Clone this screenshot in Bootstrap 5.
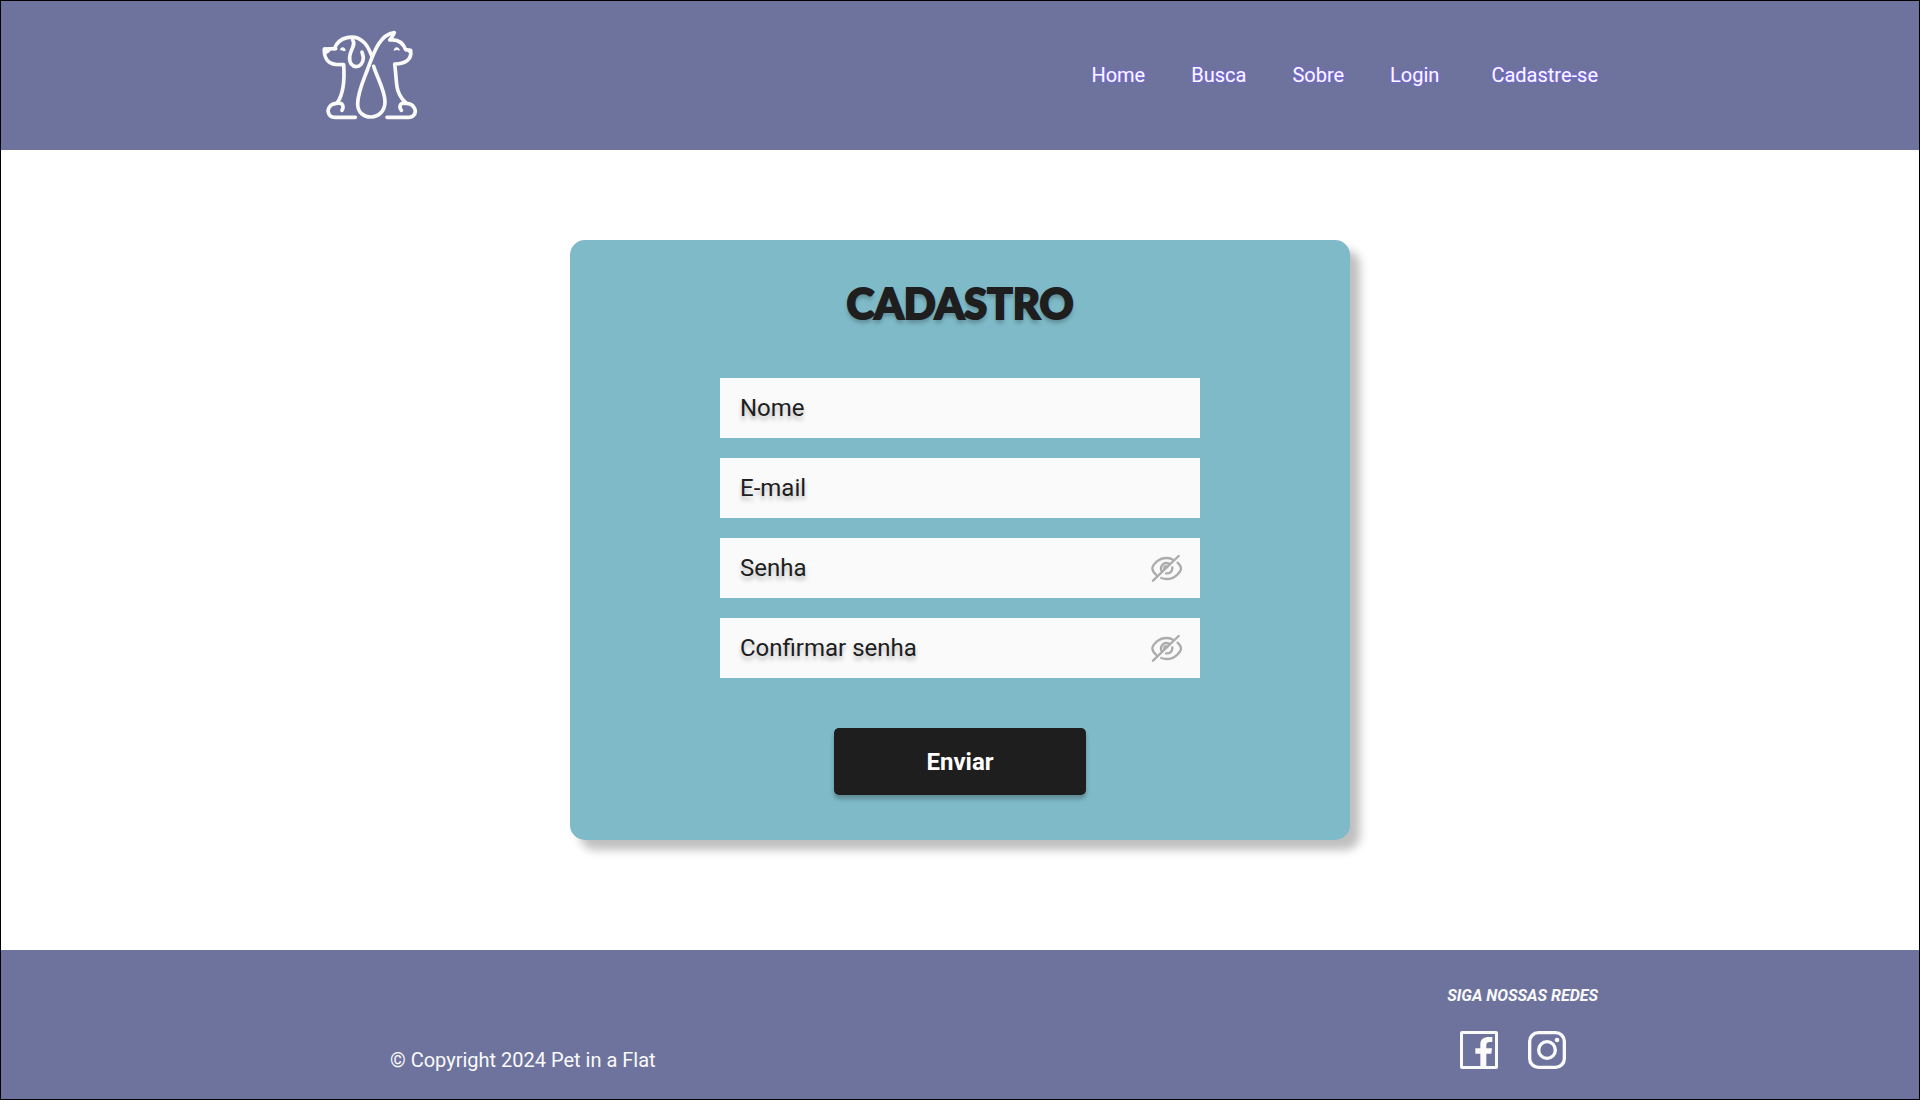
<!DOCTYPE html>
<html lang="pt-BR">
<head>
<meta charset="utf-8">
<meta name="viewport" content="width=device-width, initial-scale=1">
<title>Pet in a Flat - Cadastro</title>
<link href="https://cdn.jsdelivr.net/npm/bootstrap@5.3.0/dist/css/bootstrap.min.css" rel="stylesheet">
<style>
  body { font-family: Roboto, "Liberation Sans", sans-serif; color: #1e1e1e; background: #fff; border: 1px solid #000; }
  .bar-purple { background: #6e739e; color: #fafafa; }
  .site-header { min-height: 149px; padding-bottom: 2px; }
  .site-footer { min-height: 149px; }
  .page-width { padding-left: 22px; padding-right: 22px; }
  .menu-links { gap: 46px; }
  .menu-links .nav-link { font-size: 20px; line-height: 24px; color: #fafafa; text-shadow: 0 0 1px #7f66ff, 0 0 2px #7f66ff, 0 0 2px #7f66ff; }
  .menu-links .menu-signup { margin-left: 6px; }
  .signup-area { padding: 90px 16px; }
  .signup-card { width: 100%; max-width: 780px; min-height: 600px; border-radius: 15px; background: #7fbac8; box-shadow: 10px 10px 10px rgba(0,0,0,.25); padding: 36px 16px 44px; }
  .signup-title { font-family: Lato, Roboto, sans-serif; font-weight: 900; font-size: 42px; line-height: 54px; -webkit-text-stroke: 2px #1e1e1e; text-shadow: 0 4px 4px rgba(0,0,0,.25); }
  .signup-form { width: 100%; max-width: 480px; gap: 20px; margin-top: 48px; }
  .field-box { height: 60px; background: #fafafa; }
  .field-box .form-control { height: 60px; padding: 0 20px; font-size: 24px; color: #1e1e1e; }
  .field-label { left: 20px; font-size: 24px; line-height: 60px; pointer-events: none; text-shadow: 0 4px 4px rgba(0,0,0,.25); }
  .form-control:not(:placeholder-shown) + .field-label { opacity: 0; }
  .eye-toggle { margin-right: 18px; line-height: 0; }
  .send-button { width: 252px; height: 67px; margin-top: 30px; border-radius: 5px; border: 0; background: #1e1e1e; color: #fff; font-size: 24px; font-weight: 700; box-shadow: 0 4px 4px rgba(0,0,0,.25); }
  .copyright { font-size: 20px; line-height: 24px; padding: 0 0 27px 68px; }
  .social-title { font-size: 16px; line-height: 20px; font-weight: 700; font-style: italic; }
  .social-links { gap: 30px; padding: 25px 0 0 13px; }
  .social-links a { color: #fafafa; line-height: 0; }
</style>
<script defer src="https://cdn.jsdelivr.net/npm/bootstrap@5.3.0/dist/js/bootstrap.bundle.min.js"></script>
</head>
<body class="min-vh-100 d-flex flex-column">
<header class="site-header bar-purple d-flex align-items-center">
  <div class="container page-width d-flex justify-content-between align-items-center">
    <a href="#" aria-label="Pet in a Flat">
      <svg width="96" height="90" viewBox="36 30 288 270" fill="none" stroke="#fafafa" stroke-width="11" stroke-linecap="round" stroke-linejoin="round">
        <path d="M77 86L43 87C42 111 52 131 77 133L101 134C104 177 103 218 82 248"/>
        <path d="M73 86C87 48 134 43 157 63C170 72 179 91 185 108"/>
        <path d="M128 60C139 75 120 89 119 111C116 149 159 149 160 114C160 108 157 102 156 96"/>
        <path d="M43 83L64 86Q58 102 43 101Z" fill="#fafafa" stroke-width="2"/>
        <path d="M90 91C91 77 107 80 107 92L101 94Q96 89 90 91Z" fill="#fafafa" stroke="none"/>
        <path d="M82 250C99 246 102 261 96 271M79 250C57 252 47 273 61 288Q66 292 75 292H136"/>
        <path d="M191 139C202 174 225 212 225 245C225 304 143 306 143 252C143 218 160 182 172 150C190 102 207 44 253 38C249 46 247 52 239 60C268 56 281 73 287 89L302 91C306 117 289 132 254 132C257 153 258 180 261 200C264 222 275 236 287 248"/>
        <path d="M286 250C270 247 266 261 274 271M289 250C312 251 324 274 309 288Q304 292 296 292H231"/>
        <path d="M251 93C252 77 268 79 270 92Q260 87 251 93ZM290 87L306 92L304 103Q290 98 290 87Z" fill="#fafafa" stroke="none"/>
      </svg>
    </a>
    <nav aria-label="Principal">
      <ul class="menu-links nav">
        <li><a class="nav-link p-0" href="#">Home</a></li>
        <li><a class="nav-link p-0" href="#">Busca</a></li>
        <li><a class="nav-link p-0" href="#">Sobre</a></li>
        <li><a class="nav-link p-0" href="#">Login</a></li>
        <li class="menu-signup"><a class="nav-link p-0" href="#">Cadastre-se</a></li>
      </ul>
    </nav>
  </div>
</header>

<main class="signup-area flex-grow-1 d-flex justify-content-center align-items-start">
  <section class="signup-card d-flex flex-column align-items-center">
    <h1 class="signup-title m-0">CADASTRO</h1>
    <form class="signup-form d-flex flex-column">
      <div class="field-box position-relative d-flex align-items-center">
        <input class="form-control border-0 rounded-0 bg-transparent" id="nome" type="text" placeholder=" ">
        <label class="field-label position-absolute top-0" for="nome">Nome</label>
      </div>
      <div class="field-box position-relative d-flex align-items-center">
        <input class="form-control border-0 rounded-0 bg-transparent" id="email" type="email" placeholder=" ">
        <label class="field-label position-absolute top-0" for="email">E-mail</label>
      </div>
      <div class="field-box position-relative d-flex align-items-center">
        <input class="form-control border-0 rounded-0 bg-transparent" id="senha" type="password" placeholder=" ">
        <label class="field-label position-absolute top-0" for="senha">Senha</label>
        <button class="eye-toggle btn p-0 border-0" type="button" aria-label="Mostrar senha">
          <svg width="32" height="28" viewBox="0 0 96 84" fill="none" stroke="#acacac" stroke-width="7" stroke-linecap="round">
            <path id="eye-shape" d="M9 80L86 6M18 62C10 55 7 48 7 43C7 34 24 12 49 12Q59 12 67 16M83 26C90 33 93 39 93 43C93 52 76 75 50 75Q41 75 34 72M35 52C28 36 42 22 57 29M67 40C68 52 59 60 48 58M43 45C42 38 46 36 50 37"/>
          </svg>
        </button>
      </div>
      <div class="field-box position-relative d-flex align-items-center">
        <input class="form-control border-0 rounded-0 bg-transparent" id="confirmar" type="password" placeholder=" ">
        <label class="field-label position-absolute top-0" for="confirmar">Confirmar senha</label>
        <button class="eye-toggle btn p-0 border-0" type="button" aria-label="Mostrar senha">
          <svg width="32" height="28" viewBox="0 0 96 84" fill="none" stroke="#acacac" stroke-width="7" stroke-linecap="round"><use href="#eye-shape"/></svg>
        </button>
      </div>
      <button class="send-button btn align-self-center" type="submit">Enviar</button>
    </form>
  </section>
</main>

<footer class="site-footer bar-purple d-flex">
  <div class="container page-width d-flex justify-content-between">
    <p class="copyright m-0 align-self-end">© Copyright 2024 Pet in a Flat</p>
    <div class="pt-4 mt-2">
      <div class="social-title mt-1">SIGA NOSSAS REDES</div>
      <div class="social-links d-flex">
        <a href="#" aria-label="Facebook">
          <svg width="38" height="38" viewBox="0 0 114 114" fill="currentColor"><path fill-rule="evenodd" d="M6 0H108Q114 0 114 6V108Q114 114 108 114H6Q0 114 0 108V6Q0 0 6 0ZM9 9V105H61V68H46V52H61V40C61 22 73 16 97 18V33H90Q79 33 79 43V52H96L94 68H79V105H105V9Z"/></svg>
        </a>
        <a href="#" aria-label="Instagram">
          <svg width="38" height="38" viewBox="0 0 114 114" fill="none" stroke="currentColor" stroke-width="10"><rect x="5" y="5" width="104" height="104" rx="26"/><circle cx="57" cy="57" r="25"/><circle cx="87" cy="27" r="7" fill="currentColor" stroke="none"/></svg>
        </a>
      </div>
    </div>
  </div>
</footer>
</body>
</html>
